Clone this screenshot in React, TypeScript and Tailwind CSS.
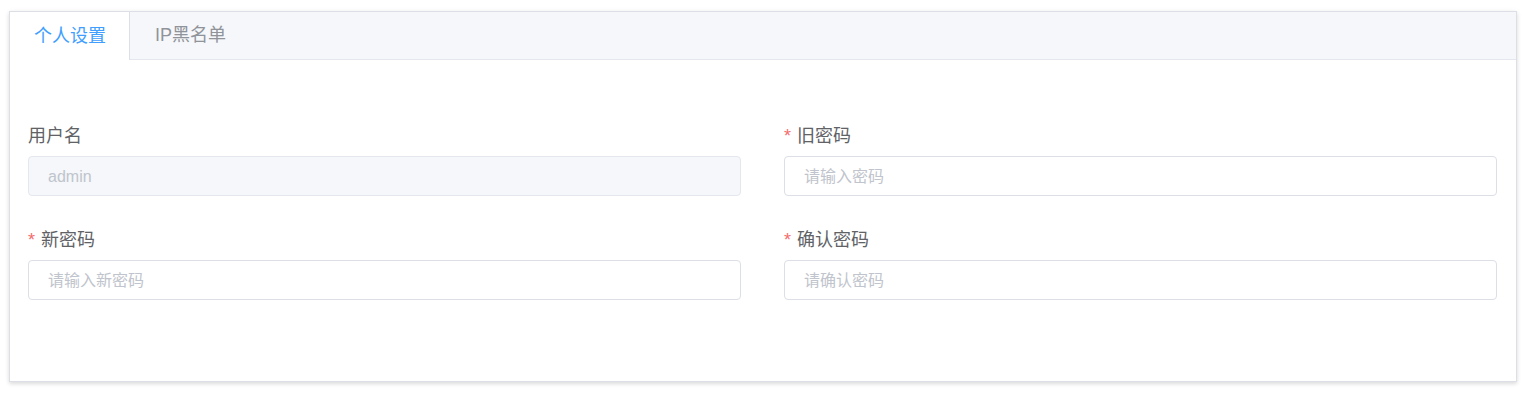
import React from "react";

const font = { fontFamily: '"Liberation Sans", "Noto Sans CJK SC", sans-serif' };

function Label({ text, required }: { text: string; required?: boolean }) {
  return (
    <div className="h-[40px] leading-[40px] text-[18px] text-[#606266] flex items-center">
      {required && <span className="text-[#F56C6C] mr-[6px] text-[18px]">*</span>}
      <span>{text}</span>
    </div>
  );
}

function Field({
  label,
  required,
  placeholder,
  value,
  disabled,
}: {
  label: string;
  required?: boolean;
  placeholder?: string;
  value?: string;
  disabled?: boolean;
}) {
  return (
    <div className="flex flex-col">
      <Label text={label} required={required} />
      <input
        style={font}
        disabled={disabled}
        defaultValue={value}
        placeholder={placeholder}
        className={
          "h-[40px] w-full rounded-[4px] border pl-[19px] pr-[15px] pt-px text-[16px] outline-none placeholder:text-[#C0C4CC] " +
          (disabled
            ? "bg-[#F5F7FA] border-[#E4E7ED] text-[#C0C4CC]"
            : "bg-white border-[#DCDFE6] text-[#606266]")
        }
      />
    </div>
  );
}

export default function App() {
  return (
    <div className="w-[1526px] h-[393px] bg-white pt-[11px] pl-[9px]" style={font}>
      <div className="w-[1508px] h-[371px] border border-[#DCDFE6] bg-white shadow-[0_2px_4px_0_rgba(0,0,0,0.12),0_0_6px_0_rgba(0,0,0,0.04)]">
        <div className="h-[48px] bg-[#F5F7FA] border-b border-[#E4E7ED] flex">
          <div className="h-[48px] w-[120px] bg-white border-r border-[#DCDFE6] flex items-center pl-[24px] text-[18px] text-[#409EFF]">
            个人设置
          </div>
          <div className="h-[47px] flex items-center pl-[25px] pr-[24px] text-[18px] text-[#909399]">
            IP黑名单
          </div>
        </div>
        <div className="pt-[56px] pl-[18px] pr-[19px]">
          <div className="grid grid-cols-2 gap-x-[43px] gap-y-[24px]">
            <Field label="用户名" value="admin" disabled />
            <Field label="旧密码" required placeholder="请输入密码" />
            <Field label="新密码" required placeholder="请输入新密码" />
            <Field label="确认密码" required placeholder="请确认密码" />
          </div>
        </div>
      </div>
    </div>
  );
}
